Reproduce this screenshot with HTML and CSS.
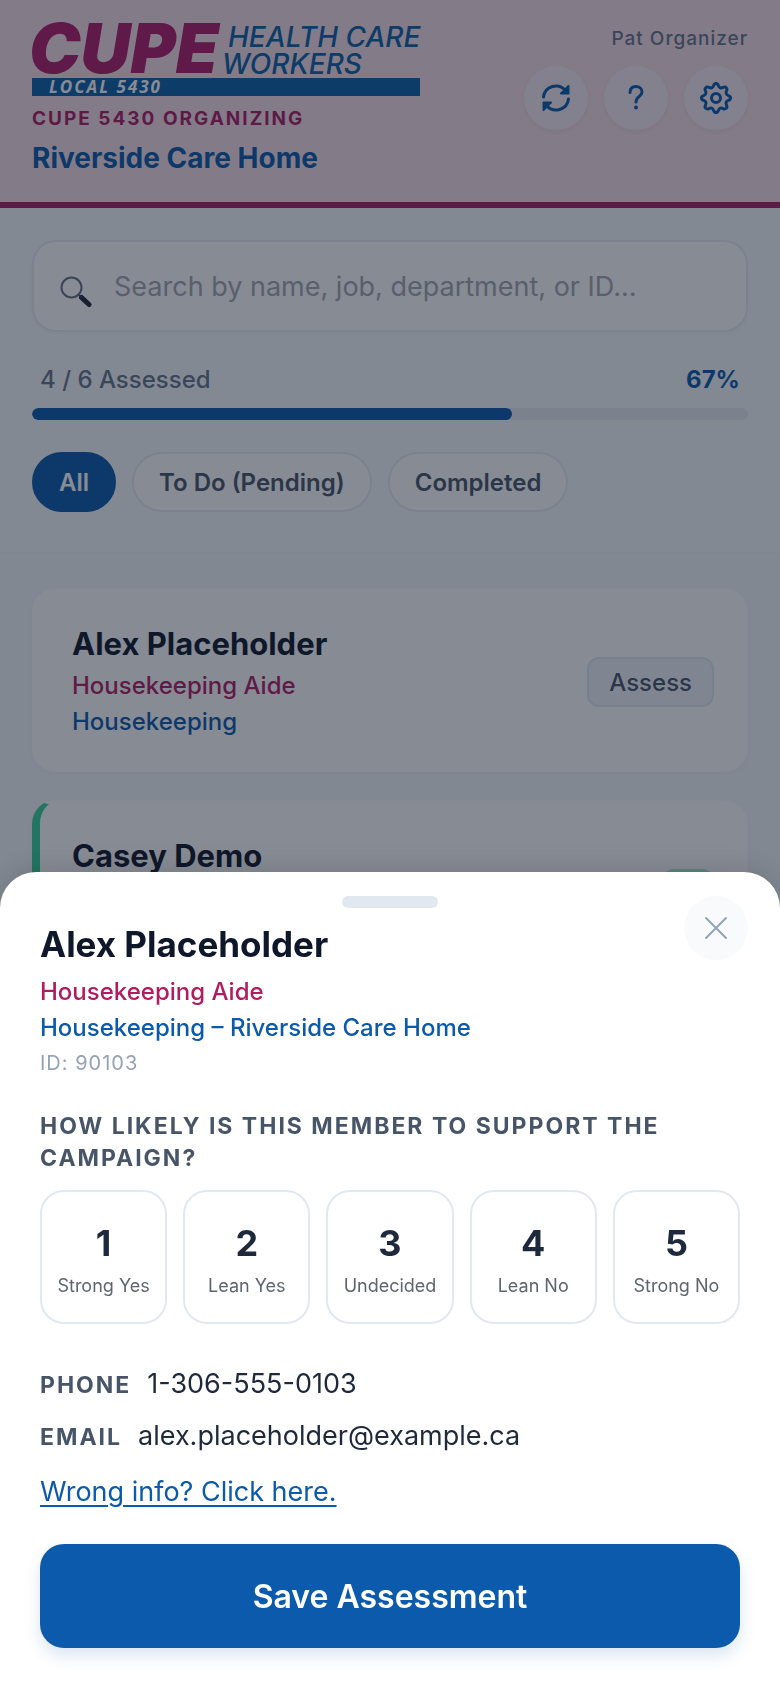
FILE: index.html
```
<!DOCTYPE html>
<html lang="en">
<head>
  <meta charset="UTF-8">
  <meta name="viewport" content="width=device-width, initial-scale=1.0">
  <title>CUPE 5430 Organizing</title>
  <link rel="stylesheet" href="styles.css">
</head>
<body>
  <div class="app">
    <header class="header">
      <div class="brand">
        <svg class="logo" viewBox="0 0 388 72" role="img" aria-label="CUPE Health Care Workers Local 5430">
          <text class="logo-cupe" x="-3" y="49">CUPE</text>
          <text class="logo-sub" x="196" y="23">HEALTH CARE</text>
          <text class="logo-sub" x="190" y="50">WORKERS</text>
          <rect class="logo-bar" y="54" width="388" height="18" />
          <text class="logo-local" x="17" y="69">LOCAL 5430</text>
        </svg>
        <p class="org">CUPE 5430 Organizing</p>
        <h1 class="site">Riverside Care Home</h1>
      </div>
      <div class="user">
        <span class="user-name">Pat Organizer</span>
        <div class="actions">
          <button type="button" class="round-btn" aria-label="Refresh">
            <svg width="32" height="32" viewBox="0 0 32 32">
              <path d="M3.500 15A12.500 12.500 0 0 1 25.500 8.500l2 2M28.500 17A12.500 12.500 0 0 1 6.500 23.500l-2-2" />
              <path class="tip" d="M28.500 4v7.500h-7.500zM3.500 28v-7.500h7.500z" />
            </svg>
          </button>
          <button type="button" class="round-btn" aria-label="Help">
            <svg width="32" height="32" viewBox="0 0 32 32">
              <path d="M10 10.500C10 6.500 12.500 4.500 16 4.500s6 2.200 6 5.500c0 4.500-6 4.500-6 10" />
              <circle class="dot" cx="16" cy="25.500" r="2" />
            </svg>
          </button>
          <button type="button" class="round-btn" aria-label="Settings">
            <svg width="32" height="32" viewBox="0 0 32 32">
              <path id="teeth" d="M16 1.500C19 1.500 17.700 4.800 20.200 5.800C22.700 6.900 24 3.500 26.250 5.750C28.500 8 25.100 9.300 26.200 11.800C27.200 14.300 30.500 13 30.500 16" />
              <use href="#teeth" transform="rotate(90 16 16)" />
              <use href="#teeth" transform="rotate(180 16 16)" />
              <use href="#teeth" transform="rotate(270 16 16)" />
              <circle cx="16" cy="16" r="4.500" />
            </svg>
          </button>
        </div>
      </div>
    </header>

    <section class="filters">
      <div class="search">
        <svg class="search-icon" width="32" height="32" viewBox="0 0 32 32" aria-hidden="true">
          <path class="grip" d="M21.500 21.500l7.500 7" />
          <path class="neck" d="M18.500 18.500l3 3" />
          <circle class="lens" cx="11.500" cy="11.500" r="10" />
        </svg>
        <input type="text" id="search" aria-label="Search members" placeholder="Search by name, job, department, or ID...">
      </div>
      <div class="progress-label">
        <span>4 / 6 Assessed</span>
        <span class="percent">67%</span>
      </div>
      <div class="track"><div class="fill" style="width: 67%"></div></div>
      <div class="chips">
        <button type="button" class="chip active">All</button>
        <button type="button" class="chip">To Do (Pending)</button>
        <button type="button" class="chip">Completed</button>
      </div>
    </section>

    <main class="list">
      <article class="card">
        <div>
          <h2 class="card-name">Alex Placeholder</h2>
          <p class="role">Housekeeping Aide</p>
          <p class="dept">Housekeeping</p>
        </div>
        <button type="button" class="assess">Assess</button>
      </article>
      <article class="card done">
        <div>
          <h2 class="card-name">Casey Demo</h2>
          <p class="role">&nbsp;</p>
          <p class="dept">&nbsp;</p>
        </div>
        <span class="score"></span>
      </article>
    </main>
  </div>

  <div class="overlay">
    <div class="sheet" role="dialog" aria-labelledby="member">
      <div class="handle"></div>
      <button type="button" class="close" aria-label="Close">
        <svg width="24" height="24" viewBox="0 0 24 24">
          <path d="M2 2l20 20M22 2L2 22" />
        </svg>
      </button>
      <h2 class="member" id="member">Alex Placeholder</h2>
      <p class="role">Housekeeping Aide</p>
      <p class="dept">Housekeeping – Riverside Care Home</p>
      <p class="member-id">ID: 90103</p>

      <h3 class="question">How likely is this member to support the campaign?</h3>
      <div class="scores">
        <button type="button" class="score-btn"><b>1</b><span>Strong Yes</span></button>
        <button type="button" class="score-btn"><b>2</b><span>Lean Yes</span></button>
        <button type="button" class="score-btn"><b>3</b><span>Undecided</span></button>
        <button type="button" class="score-btn"><b>4</b><span>Lean No</span></button>
        <button type="button" class="score-btn"><b>5</b><span>Strong No</span></button>
      </div>

      <dl class="contact">
        <div><dt>Phone</dt><dd>1-306-555-0103</dd></div>
        <div><dt>Email</dt><dd>alex.placeholder@example.ca</dd></div>
      </dl>
      <a class="wrong" href="#">Wrong info? Click here.</a>
      <button type="button" class="save">Save Assessment</button>
    </div>
  </div>
</body>
</html>
```
FILE: styles.css
```
* {
  box-sizing: border-box;
}

body {
  margin: 0;
  font-family: Inter, "Liberation Sans", sans-serif;
  font-size: 24px;
  color: #1e293b;
  background: #f5f8fa;
}

h1, h2, h3, p, dl, dd {
  margin: 0;
}

button,
input {
  font: inherit;
  color: inherit;
}

button {
  cursor: pointer;
}

svg {
  display: block;
  fill: none;
  stroke-linecap: round;
  stroke-linejoin: round;
}

.app {
  height: 100vh;
  overflow: hidden;
}

/* header */
.header {
  display: flex;
  justify-content: space-between;
  padding: 24px 32px 26px;
  background: #f7dfe4;
  border-bottom: 6px solid #ad1d64;
}

.logo {
  width: 388px;
  height: 72px;
  overflow: visible;
}

.logo text {
  stroke: none;
  font-style: italic;
}

.logo-cupe {
  fill: #b01c68;
  font-size: 69px;
  font-weight: 900;
}

.logo-sub {
  fill: #0b60a8;
  font-size: 28px;
  font-weight: 500;
}

.logo-bar {
  fill: #0b60a8;
}

.logo-local {
  fill: #fff;
  font-family: "Open Sans", sans-serif;
  font-size: 17px;
  font-weight: 700;
  letter-spacing: 2px;
}

.org {
  margin-top: 8px;
  font-size: 19px;
  line-height: 30px;
  font-weight: 700;
  letter-spacing: 2px;
  text-transform: uppercase;
  color: #ad1d64;
}

.site {
  margin-top: 6px;
  font-size: 28px;
  line-height: 36px;
  font-weight: 700;
  color: #0b5aab;
}

.user {
  display: flex;
  flex-direction: column;
  align-items: flex-end;
  gap: 12px;
}

.user-name {
  font-size: 19px;
  line-height: 30px;
  font-weight: 500;
  letter-spacing: 1px;
  color: #64748b;
}

.actions {
  display: flex;
  gap: 16px;
}

.round-btn,
.close {
  display: grid;
  place-items: center;
  width: 64px;
  height: 64px;
  padding: 0;
  border: 0;
  border-radius: 50%;
}

.round-btn {
  background: #f6eaf2;
  box-shadow: 0 2px 6px rgba(15, 23, 42, 0.05);
}

.round-btn svg {
  stroke: #0b5aab;
  stroke-width: 3;
}

.round-btn .dot {
  fill: #0b5aab;
  stroke: none;
}

.round-btn .tip {
  fill: #0b5aab;
  stroke-width: 2;
}

/* search and filters */
.filters {
  padding: 32px 32px 40px;
  background: #f7fafc;
  border-bottom: 2px solid #f0f2f7;
}

.search {
  display: flex;
  align-items: center;
  gap: 22px;
  height: 92px;
  padding: 0 26px;
  background: #fff;
  border: 2px solid #e9ebf2;
  border-radius: 24px;
  box-shadow: 0 2px 4px rgba(15, 23, 42, 0.03);
}

.search-icon {
  flex: none;
  margin-top: 12px;
}

.search-icon .lens {
  stroke: #6b7280;
  stroke-width: 2;
}

.search-icon .neck {
  stroke: #334155;
  stroke-width: 2;
}

.search-icon .grip {
  stroke: #1e2430;
  stroke-width: 5;
}

.search input {
  flex: 1;
  min-width: 0;
  padding: 0;
  border: 0;
  outline: 0;
  background: none;
  font-size: 27px;
}

.search input::placeholder {
  color: #a3a6ae;
}

.progress-label {
  display: flex;
  justify-content: space-between;
  padding: 30px 8px 10px;
  line-height: 36px;
  font-weight: 500;
  color: #64748b;
}

.percent {
  font-weight: 700;
  color: #0b5aab;
}

.track {
  height: 12px;
  background: #e8eaf2;
  border-radius: 6px;
  overflow: hidden;
}

.fill {
  height: 12px;
  background: #0b5aab;
  border-radius: 6px;
}

.chips {
  display: flex;
  gap: 16px;
  margin-top: 32px;
}

.chip {
  height: 60px;
  padding: 0 25px;
  background: #fff;
  border: 2px solid #e9ebf2;
  border-radius: 30px;
  font-weight: 600;
  color: #475569;
}

.chip.active {
  background: #0b5aab;
  border-color: #0b5aab;
  color: #fff;
}

/* member list */
.list {
  display: grid;
  gap: 28px;
  padding: 34px 32px;
}

.card {
  display: flex;
  align-items: center;
  justify-content: space-between;
  padding: 34px 32px 30px;
  background: #fff;
  border: 2px solid #fdfdfe;
  border-left: 8px solid #fff;
  border-radius: 24px;
  box-shadow: 0 2px 8px rgba(15, 23, 42, 0.03);
}

.card.done {
  border-left-color: #34d399;
}

.card-name {
  margin-bottom: 4px;
  font-size: 31px;
  line-height: 40px;
  font-weight: 700;
  color: #0f172a;
}

.role,
.dept {
  line-height: 36px;
  font-weight: 500;
}

.role {
  color: #b01c60;
}

.dept {
  color: #0b5aab;
}

.assess {
  height: 50px;
  padding: 0 20px;
  background: #f1f5f9;
  border: 2px solid #e2e8f0;
  border-radius: 12px;
  font-weight: 500;
  color: #475569;
}

.score {
  width: 52px;
  height: 50px;
  background: #a7f3d0;
  border-radius: 12px;
}

/* assessment sheet */
.overlay {
  position: fixed;
  inset: 0;
  display: flex;
  flex-direction: column;
  justify-content: flex-end;
  background: rgba(15, 23, 42, 0.5);
}

.sheet {
  position: relative;
  display: flex;
  flex-direction: column;
  padding: 24px 40px 40px;
  background: #fff;
  border-radius: 36px 36px 0 0;
  box-shadow: 0 -4px 24px rgba(0, 0, 0, 0.12);
}

.handle {
  align-self: center;
  width: 96px;
  height: 12px;
  background: #e2e8f0;
  border-radius: 6px;
}

.close {
  position: absolute;
  top: 24px;
  right: 32px;
  background: #f8fafc;
}

.close svg {
  stroke: #94a3b8;
  stroke-width: 2;
}

.member {
  margin: 12px 0 6px;
  font-size: 35px;
  line-height: 48px;
  font-weight: 700;
  color: #0f172a;
}

.member-id {
  font-size: 20px;
  line-height: 34px;
  letter-spacing: 1px;
  color: #94a3b8;
}

.question {
  margin: 30px 0 16px;
  font-size: 23px;
  line-height: 32px;
  font-weight: 700;
  letter-spacing: 2px;
  text-transform: uppercase;
  color: #475569;
}

.scores {
  display: grid;
  grid-template-columns: repeat(5, 1fr);
  gap: 16px;
}

.score-btn {
  display: flex;
  flex-direction: column;
  align-items: center;
  gap: 10px;
  padding: 28px 0 26px;
  background: #fff;
  border: 2px solid #e2e8f0;
  border-radius: 24px;
}

.score-btn b {
  font-size: 36px;
  line-height: 46px;
  font-weight: 700;
}

.score-btn span {
  font-size: 18px;
  line-height: 20px;
  color: #5f646d;
}

.contact {
  display: grid;
  gap: 12px;
  margin-top: 40px;
}

.contact div {
  display: flex;
  align-items: baseline;
  gap: 16px;
}

.contact dt {
  font-size: 23px;
  font-weight: 700;
  letter-spacing: 2px;
  text-transform: uppercase;
  color: #475569;
}

.contact dd {
  font-size: 27px;
  line-height: 40px;
}

.wrong {
  align-self: flex-start;
  margin-top: 16px;
  font-size: 27px;
  line-height: 40px;
  color: #0b5aab;
  text-underline-offset: 4px;
}

.save {
  height: 104px;
  margin-top: 32px;
  background: #0b5aab;
  border: 0;
  border-radius: 24px;
  box-shadow: 0 8px 16px rgba(11, 90, 171, 0.15);
  font-size: 32px;
  font-weight: 600;
  color: #fff;
}
```
